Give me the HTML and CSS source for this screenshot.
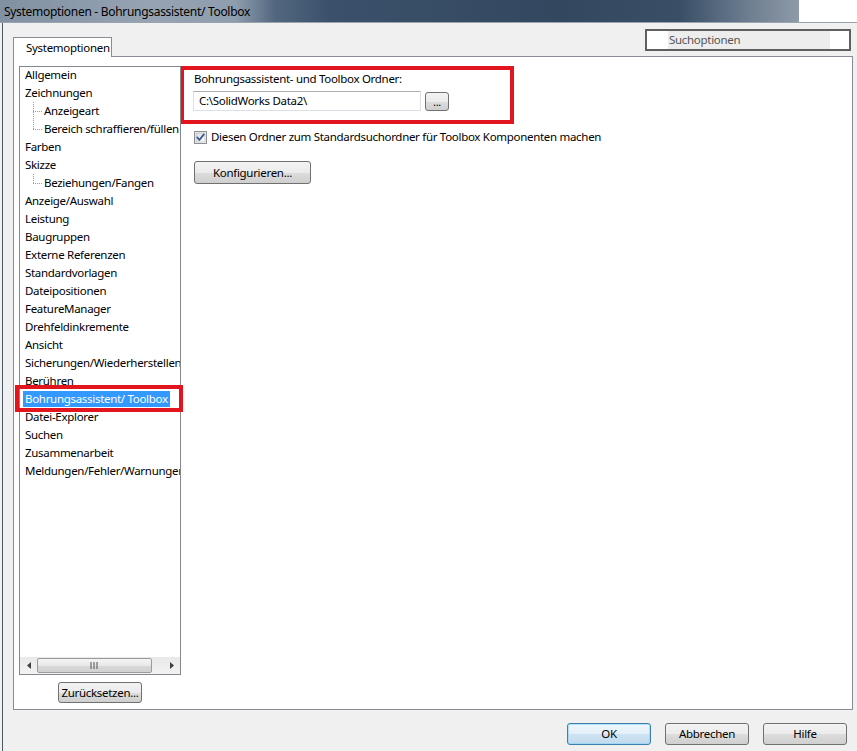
FILE: index.html
```html
<!DOCTYPE html>
<html lang="de">
<head>
<meta charset="utf-8">
<title>Systemoptionen - Bohrungsassistent/ Toolbox</title>
<link rel="stylesheet" href="styles.css">
</head>
<body>
<div class="window">
  <div class="titlebar">
    <div class="title-glass"><span class="title-text">Systemoptionen - Bohrungsassistent/ Toolbox</span></div>
  </div>
  <div class="dialog">
    <div class="header">
      <div class="tab">Systemoptionen</div>
      <div class="search">
        <span class="search-pad"></span>
        <span class="search-text">Suchoptionen</span>
        <span class="search-pad right"></span>
      </div>
    </div>
    <div class="panel">
      <div class="sidebar">
        <div class="tree-wrap">
          <div class="tree">
            <ul class="items">
              <li class="item">Allgemein</li>
              <li class="item">Zeichnungen</li>
              <li class="item child">Anzeigeart</li>
              <li class="item child last">Bereich schraffieren/füllen</li>
              <li class="item">Farben</li>
              <li class="item">Skizze</li>
              <li class="item child last">Beziehungen/Fangen</li>
              <li class="item">Anzeige/Auswahl</li>
              <li class="item">Leistung</li>
              <li class="item">Baugruppen</li>
              <li class="item">Externe Referenzen</li>
              <li class="item">Standardvorlagen</li>
              <li class="item">Dateipositionen</li>
              <li class="item">FeatureManager</li>
              <li class="item">Drehfeldinkremente</li>
              <li class="item">Ansicht</li>
              <li class="item">Sicherungen/Wiederherstellen</li>
              <li class="item">Berühren</li>
              <li class="item"><span class="selected">Bohrungsassistent/ Toolbox</span></li>
              <li class="item">Datei-Explorer</li>
              <li class="item">Suchen</li>
              <li class="item">Zusammenarbeit</li>
              <li class="item">Meldungen/Fehler/Warnungen</li>
            </ul>
            <div class="hscroll">
              <span class="arrow">
                <svg width="4" height="7" viewBox="0 0 4 7"><path d="M4 0 L0 3.5 L4 7 Z" fill="#404040"/></svg>
              </span>
              <div class="track">
                <div class="thumb">
                  <svg width="9" height="7" viewBox="0 0 9 7"><path d="M1 0v7M4 0v7M7 0v7" stroke="#505050" stroke-width="1"/></svg>
                </div>
              </div>
              <span class="arrow">
                <svg width="4" height="7" viewBox="0 0 4 7"><path d="M0 0 L4 3.5 L0 7 Z" fill="#404040"/></svg>
              </span>
            </div>
          </div>
          <div class="annot"></div>
        </div>
        <button class="btn reset">Zurücksetzen...</button>
      </div>
      <div class="content">
        <div class="folder-group">
          <div class="label">Bohrungsassistent- und Toolbox Ordner:</div>
          <div class="path-row">
            <div class="textbox">C:\SolidWorks Data2\</div>
            <button class="btn browse">...</button>
          </div>
        </div>
        <label class="check-row">
          <svg class="checkbox" width="13" height="13" viewBox="0 0 13 13">
            <defs>
              <linearGradient id="cb" x1="0" y1="0" x2="1" y2="1">
                <stop offset="0" stop-color="#dcdcdc"/>
                <stop offset="1" stop-color="#ffffff"/>
              </linearGradient>
            </defs>
            <rect x="0.5" y="0.5" width="12" height="12" fill="#f4f4f4" stroke="#8e8f8f"/>
            <rect x="2" y="2" width="9" height="9" fill="url(#cb)" stroke="#b0b3b8" stroke-width="0.6"/>
            <path d="M3.2 6.4 L5.4 9 L9.8 3.4" fill="none" stroke="#3b569b" stroke-width="1.8" stroke-linecap="round" stroke-linejoin="round"/>
          </svg>
          <span>Diesen Ordner zum Standardsuchordner für Toolbox Komponenten machen</span>
        </label>
        <button class="btn config">Konfigurieren...</button>
      </div>
    </div>
    <div class="footer">
      <button class="btn default">OK</button>
      <button class="btn">Abbrechen</button>
      <button class="btn">Hilfe</button>
    </div>
  </div>
</div>
</body>
</html>
```

FILE: styles.css
```css
* { box-sizing: border-box; }

html, body {
  margin: 0;
  padding: 0;
  background: #f0f0f0;
  width: 857px;
  height: 751px;
  overflow: hidden;
}

body {
  font-family: "Noto Sans", "Open Sans", sans-serif;
  font-size: 11.5px;
  letter-spacing: -0.3px;
  color: #000;
}

.window {
  width: 857px;
  height: 751px;
  display: flex;
  flex-direction: column;
}

.titlebar {
  height: 23px;
  background: #ffffff;
  border-bottom: 1px solid #9aa4ae;
  flex: none;
}

.title-glass {
  width: 799px;
  height: 22px;
  background: linear-gradient(90deg, #8190a2 0, #95a3b3 150px, #8f9eae 235px, #52677f 275px, #3b516b 330px, #33485f 560px, #3a4f66 680px, #6e7f91 750px, #8e9aa7 799px);
  display: flex;
  align-items: center;
  padding-left: 4px;
}

.title-text {
  font-size: 12px;
  color: #000;
  line-height: 21px;
}

.dialog {
  flex: 1;
  margin-left: 2px;
  border-left: 1px solid #4b5866;
  padding: 6px 4px 0 10px;
  display: flex;
  flex-direction: column;
}

.header {
  display: flex;
  justify-content: space-between;
  align-items: flex-end;
  height: 27px;
}

.tab {
  width: 99px;
  height: 20px;
  background: #ffffff;
  border: 1px solid #898c95;
  border-bottom: none;
  padding-left: 12px;
  line-height: 19px;
  margin-bottom: -1px;
  position: relative;
  z-index: 1;
  white-space: nowrap;
}

.search {
  width: 206px;
  height: 22px;
  border: 2px solid #5f5f5f;
  display: flex;
  margin-bottom: 5px;
  margin-right: 2px;
  background: #ededed;
}

.search-pad {
  width: 21px;
  background: #ffffff;
}

.search-pad.right {
  width: 19px;
  margin-left: auto;
}

.search-text {
  color: #555;
  line-height: 18px;
  padding-left: 1px;
}

.panel {
  height: 654px;
  background: #ffffff;
  border: 1px solid #898c95;
  padding: 9px 0 0 5px;
  display: flex;
  flex: none;
}

.sidebar {
  width: 162px;
  display: flex;
  flex-direction: column;
  align-items: center;
  flex: none;
}

.tree-wrap {
  position: relative;
  width: 162px;
  height: 609px;
}

.tree {
  width: 100%;
  height: 100%;
  border: 1px solid #828790;
  display: flex;
  flex-direction: column;
  background: #fff;
}

.items {
  list-style: none;
  margin: -1px 0 0;
  padding: 0;
  flex: 1;
}

.item {
  height: 18px;
  line-height: 18px;
  padding-left: 5px;
  white-space: nowrap;
  overflow: hidden;
}

.item.child {
  padding-left: 24px;
  background:
    repeating-linear-gradient(to bottom, #9a9a9a 0 1px, transparent 1px 2px) 13px 0 / 1px 18px no-repeat,
    repeating-linear-gradient(to right, #9a9a9a 0 1px, transparent 1px 2px) 13px 9px / 10px 1px no-repeat;
}

.item.child.last {
  background:
    repeating-linear-gradient(to bottom, #9a9a9a 0 1px, transparent 1px 2px) 13px 0 / 1px 10px no-repeat,
    repeating-linear-gradient(to right, #9a9a9a 0 1px, transparent 1px 2px) 13px 9px / 10px 1px no-repeat;
}

.selected {
  display: inline-block;
  background: #3399ff;
  color: #fff;
  line-height: 16px;
  padding: 0 2px;
  margin-left: -2px;
}

.hscroll {
  height: 17px;
  display: flex;
  align-items: center;
  background: linear-gradient(#e9e9e9, #f2f2f2);
  flex: none;
}

.arrow {
  width: 17px;
  height: 17px;
  display: flex;
  align-items: center;
  justify-content: center;
  flex: none;
}

.track {
  flex: 1;
  height: 17px;
  display: flex;
  align-items: center;
}

.thumb {
  width: 115px;
  height: 15px;
  border: 1px solid #9b9b9b;
  border-radius: 2px;
  background: linear-gradient(#f4f4f4 0, #e9e9e9 50%, #d9d9d9 51%, #d2d2d2 100%);
  display: flex;
  align-items: center;
  justify-content: center;
}

.annot {
  position: absolute;
  left: -4px;
  top: 319px;
  width: 168px;
  height: 27px;
  border: 4px solid #e2141e;
  pointer-events: none;
}

.btn {
  font-family: "Noto Sans", "Open Sans", sans-serif;
  font-size: 11.5px;
  letter-spacing: -0.3px;
  color: #000;
  border: 1px solid #707070;
  border-radius: 3px;
  background: linear-gradient(#f3f3f3 0, #ebebeb 50%, #dddddd 51%, #cfcfcf 100%);
  padding: 0;
  line-height: 1;
  cursor: default;
}

.reset {
  width: 84px;
  height: 21px;
  margin-top: 7px;
}

.content {
  display: flex;
  flex-direction: column;
  align-items: flex-start;
}

.folder-group {
  width: 334px;
  height: 58px;
  border: 4px solid #e2141e;
  margin-left: -1px;
  padding: 0 0 0 10px;
}

.label {
  line-height: 17px;
}

.path-row {
  display: flex;
  align-items: center;
  margin-top: 4px;
  margin-left: -1px;
  gap: 4px;
}

.textbox {
  width: 228px;
  height: 20px;
  border: 1px solid #dbdfe6;
  border-top-color: #abadb3;
  padding-left: 5px;
  line-height: 18px;
  background: #fff;
}

.browse {
  width: 24px;
  height: 19px;
  font-size: 11px;
}

.check-row {
  display: flex;
  align-items: center;
  gap: 4px;
  margin: 6px 0 0 13px;
  height: 14px;
  line-height: 14px;
}

.checkbox {
  flex: none;
}

.config {
  width: 117px;
  height: 23px;
  margin: 17px 0 0 13px;
}

.footer {
  display: flex;
  justify-content: flex-end;
  gap: 14px;
  padding: 13px 6px 0 0;
}

.footer .btn {
  width: 84px;
  height: 22px;
}

.footer .btn.default {
  border-color: #3c7fb1;
  background: linear-gradient(#eef6fc 0, #e3eff9 50%, #cfe3f3 51%, #c2daee 100%);
  box-shadow: inset 0 0 0 1px rgba(140, 210, 245, 0.6);
}
```
